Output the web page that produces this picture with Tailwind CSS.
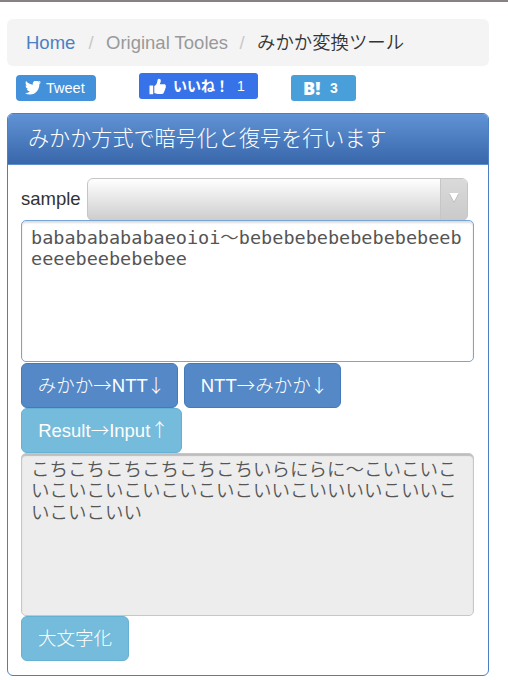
<!DOCTYPE html>
<html lang="ja">
<head>
    <meta charset="UTF-8">
    <meta name="viewport" content="width=device-width, initial-scale=1.0">
    <title>みかか変換ツール</title>
    <script src="https://cdn.jsdelivr.net/npm/@tailwindcss/browser@4"></script>
</head>
<body class="h-[680px] overflow-hidden bg-white border-t-2 border-[#858184] pt-[17px] pl-[7px] font-['Liberation_Sans','Noto_Sans_CJK_JP',sans-serif] text-[18.5px] text-[#333] font-[350]">
    <nav class="w-[482px] h-[47px] px-[19px] pt-px flex items-center bg-[#f4f4f4] rounded-md whitespace-nowrap">
        <a href="#" class="w-[50px] text-[#4a80c4]">Home</a>
        <span class="w-[30px] text-center text-[#c8c8c8]">/</span>
        <span class="w-[121px] text-[#999]">Original Tooles</span>
        <span class="w-[30px] text-center text-[#c8c8c8]">/</span>
        <span class="text-[18.4px]">みかか変換ツール</span>
    </nav>

    <div class="h-[47px] pt-[7px] pl-[9px] flex items-start text-white">
        <a href="#" class="mt-[2px] w-[80px] h-[26px] pl-[9px] flex items-center rounded-[4px] bg-[#4491db] text-[14.5px] font-normal">
            <svg class="w-4 h-[14px] mr-[5px]" viewBox="0 3 24 19.500" preserveAspectRatio="none" fill="currentColor"><path d="M23.950 4.570a10 10 0 0 1-2.825.775 4.958 4.958 0 0 0 2.163-2.723c-.951.555-2.005.959-3.127 1.184a4.920 4.920 0 0 0-8.384 4.482C7.690 8.095 4.067 6.130 1.640 3.162a4.822 4.822 0 0 0-.666 2.475c0 1.710.87 3.213 2.188 4.096a4.904 4.904 0 0 1-2.228-.616v.06a4.923 4.923 0 0 0 3.946 4.827 4.996 4.996 0 0 1-2.212.085 4.936 4.936 0 0 0 4.604 3.417 9.867 9.867 0 0 1-6.102 2.105c-.39 0-.779-.023-1.170-.067a13.995 13.995 0 0 0 7.557 2.209c9.053 0 13.998-7.496 13.998-13.985 0-.21 0-.42-.015-.63A9.935 9.935 0 0 0 24 4.590z"/></svg>
            <span class="pt-px">Tweet</span>
        </a>
        <a href="#" class="ml-[43px] w-[119px] h-[26px] pl-[10px] flex items-center rounded-[3px] bg-[#3872e8] text-[14px] font-bold">
            <svg class="w-[17px] h-[17px] mr-[7px] shrink-0" viewBox="0 0 17 17" fill="currentColor"><path d="M.5 7.500h3.700v8.700H.5zM5.300 8c1.900-.8 2.600-2.500 3-4.500.2-1.500.5-2.800 1.700-2.800 1.700 0 2.100 1.500 1.600 3.200l-.8 2.300h4.300c1.300 0 2 1 1.600 2.100.4.700.2 1.500-.4 2 .2.800-.1 1.400-.6 1.800.1.800-.2 1.400-.8 1.800 0 1.300-.8 2-2.100 2H8.700c-1.300 0-2.300-.6-3.400-.9z"/></svg>
            <span class="w-[64px] shrink-0 whitespace-nowrap">いいね！</span>
            <span class="font-normal">1</span>
        </a>
        <a href="#" class="mt-[2px] ml-[33px] w-[65px] h-[26px] pl-[12px] flex items-center rounded-[3px] bg-[#489fd9] font-bold">
            <span class="w-[27px] text-[18px] font-['Open_Sans',sans-serif] font-extrabold">B!</span>
            <span class="text-[14px]">3</span>
        </a>
    </div>

    <main class="w-[482px] h-[563px] rounded-md border border-[#4a7fc4] overflow-hidden">
        <h1 class="h-[51px] pl-[20px] pb-px flex items-center border-b border-[#5f90cd] bg-linear-to-b from-[#6093d5] to-[#3867aa] text-[21.1px] font-light text-white">みかか方式で暗号化と復号を行います</h1>
        <div class="pt-[13px] px-[13px]">
            <div class="h-[42px] flex items-center">
                <label for="sample" class="w-[66px]">sample</label>
                <div id="sample" class="w-[381px] h-[43px] flex justify-end rounded-md border border-[#c5c5c5] bg-linear-to-b from-white to-[#cdcdcd] overflow-hidden">
                    <span class="w-[27px] flex items-center justify-center bg-linear-to-b from-[#dadada] to-[#cacaca] border-l border-[#c6c6c6]">
                        <svg class="w-[10px] h-[10px] mt-[-3px]" viewBox="0 0 10 10"><path d="M0 1h10L5 10z" fill="#bbb"/><path d="M.4 0h9.200L5 8.500z" fill="#fff"/></svg>
                    </span>
                </div>
            </div>

            <textarea class="relative block w-[453px] h-[142px] px-[9px] pt-[6px] resize-none overflow-hidden break-all rounded-[5px] border border-[#75a5d9] bg-white inset-shadow-[0_2px_2px_#0002] font-['DejaVu_Sans_Mono','Noto_Sans_CJK_JP',monospace] text-[18.5px] leading-[21.3px] text-[#555]">babababababaeoioi〜bebebebebebebebebeeb
eeeebeebebebee</textarea>

            <div class="mt-px flex flex-wrap gap-x-[6px] text-white font-light">
                <button class="w-[157px] h-[45px] pl-1 whitespace-nowrap rounded-md border border-[#4679b9] bg-[#5488c7]">みかか<span class="font-['Noto_Sans_CJK_JP',sans-serif] leading-none">→</span>NTT<span class="ml-[-1px] font-['Noto_Sans_CJK_JP',sans-serif] leading-none">↓</span></button>
                <button class="w-[157px] h-[45px] pl-1 whitespace-nowrap rounded-md border border-[#4679b9] bg-[#5488c7]">NTT<span class="font-['Noto_Sans_CJK_JP',sans-serif] leading-none">→</span>みかか<span class="ml-[-1px] font-['Noto_Sans_CJK_JP',sans-serif] leading-none">↓</span></button>
                <button class="w-[161px] h-[45px] pl-1 whitespace-nowrap rounded-md border border-[#65b1d3] bg-[#75bbdb]">Result<span class="font-['Noto_Sans_CJK_JP',sans-serif] leading-none">→</span>Input<span class="font-['Noto_Sans_CJK_JP',sans-serif] leading-none">↑</span></button>
            </div>

            <textarea readonly class="block w-[453px] h-[163px] px-[9px] pt-[4px] resize-none overflow-hidden break-all rounded-[5px] border border-[#c5c8c9] bg-[#ededed] inset-shadow-[0_2px_1px_#0003] font-['Noto_Sans_CJK_JP',monospace] text-[18.5px] leading-[21.3px] text-[#555]">こちこちこちこちこちこちいらにらに〜こいこいこ
いこいこいこいこいこいこいいこいいいいこいいこ
いこいこいい</textarea>

            <button class="block w-[108px] h-[45px] rounded-md border border-[#65b1d3] bg-[#75bbdb] text-white font-light">大文字化</button>
        </div>
    </main>
</body>
</html>
